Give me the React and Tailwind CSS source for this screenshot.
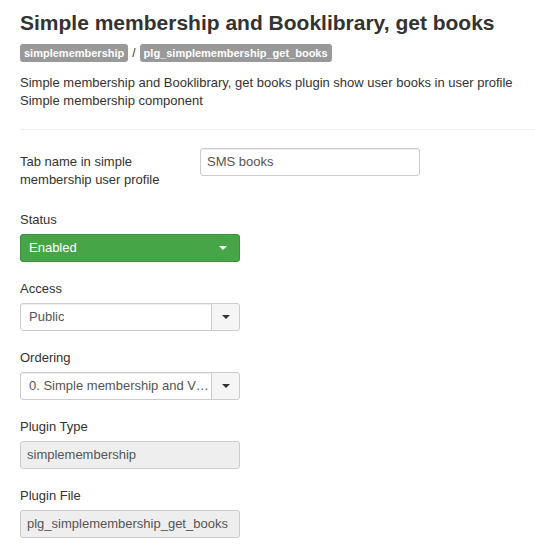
import React from 'react';

const font = { fontFamily: '"Liberation Sans", Arial, sans-serif' };

function Caret({ color = 'border-t-[#333]' }) {
  return <span className={`inline-block w-0 h-0 border-x-[4px] border-x-transparent border-t-[4px] ${color}`} />;
}

function SelectBox({ value }) {
  return (
    <div className="flex w-[220px] h-[28px] rounded-[3px] border border-[#ccc] bg-white shadow-[inset_0_1px_1px_rgba(0,0,0,0.075)] text-[13px] text-[#555]">
      <div className="flex-1 min-w-0 pl-[8px] pr-[1px] flex items-center">
        <span className="truncate">{value}</span>
      </div>
      <div className="w-[28px] flex items-center justify-center border-l border-[#ccc] bg-[#f5f5f5] rounded-r-[3px]">
        <Caret />
      </div>
    </div>
  );
}

function ReadonlyInput({ value }) {
  return (
    <div className="w-[220px] h-[28px] rounded-[3px] border border-[#ccc] bg-[#eee] px-[6px] flex items-center text-[13px] text-[#555]">
      {value}
    </div>
  );
}

function Field({ label, children }) {
  return (
    <div className="mb-[18px]">
      <div className="text-[13px] leading-[18px] text-[#333] mb-[5px]">{label}</div>
      {children}
    </div>
  );
}

export default function App() {
  return (
    <div className="bg-white min-h-screen pl-[20px] pt-[8px]" style={font}>
      {/* Cabecera */}
      <h1 className="text-[21px] leading-[30px] font-bold text-[#333] whitespace-nowrap">Simple membership and Booklibrary, get books</h1>
      <div className="flex items-center mt-[6px] gap-[4px]">
        <span className="bg-[#999] text-white text-[11px] font-bold leading-[14px] px-[4px] py-[2px] rounded-[3px]">simplemembership</span>
        <span className="text-[12px] text-[#333]">/</span>
        <span className="bg-[#999] text-white text-[11px] font-bold leading-[14px] px-[4px] py-[2px] rounded-[3px]">plg_simplemembership_get_books</span>
      </div>
      <p className="text-[13px] leading-[18px] text-[#333] mt-[12px]">
        Simple membership and Booklibrary, get books plugin show user books in user profile
        <br />
        Simple membership component
      </p>
      <hr className="border-0 border-t border-[#eee] mt-[19px] mb-[18px]" />

      {/* Formulario */}
      <div className="flex mb-[22px]">
        <div className="w-[180px] text-[13px] leading-[18px] text-[#333] pt-[5px]">
          Tab name in simple
          <br />
          membership user profile
        </div>
        <div className="w-[220px] h-[28px] rounded-[3px] border border-[#ccc] bg-white shadow-[inset_0_1px_1px_rgba(0,0,0,0.075)] px-[6px] flex items-center text-[13px] text-[#555]">
          SMS books
        </div>
      </div>

      <Field label="Status">
        <div className="flex w-[220px] h-[28px] rounded-[3px] border border-[#3c8f3c] bg-[#46a546] text-[13px] text-white items-center justify-between pl-[8px] pr-[12px]">
          <span>Enabled</span>
          <Caret color="border-t-white" />
        </div>
      </Field>

      <Field label="Access">
        <SelectBox value="Public" />
      </Field>

      <Field label="Ordering">
        <SelectBox value="0. Simple membership and Virtuemart, get books" />
      </Field>

      <Field label="Plugin Type">
        <ReadonlyInput value="simplemembership" />
      </Field>

      <Field label="Plugin File">
        <ReadonlyInput value="plg_simplemembership_get_books" />
      </Field>
    </div>
  );
}
